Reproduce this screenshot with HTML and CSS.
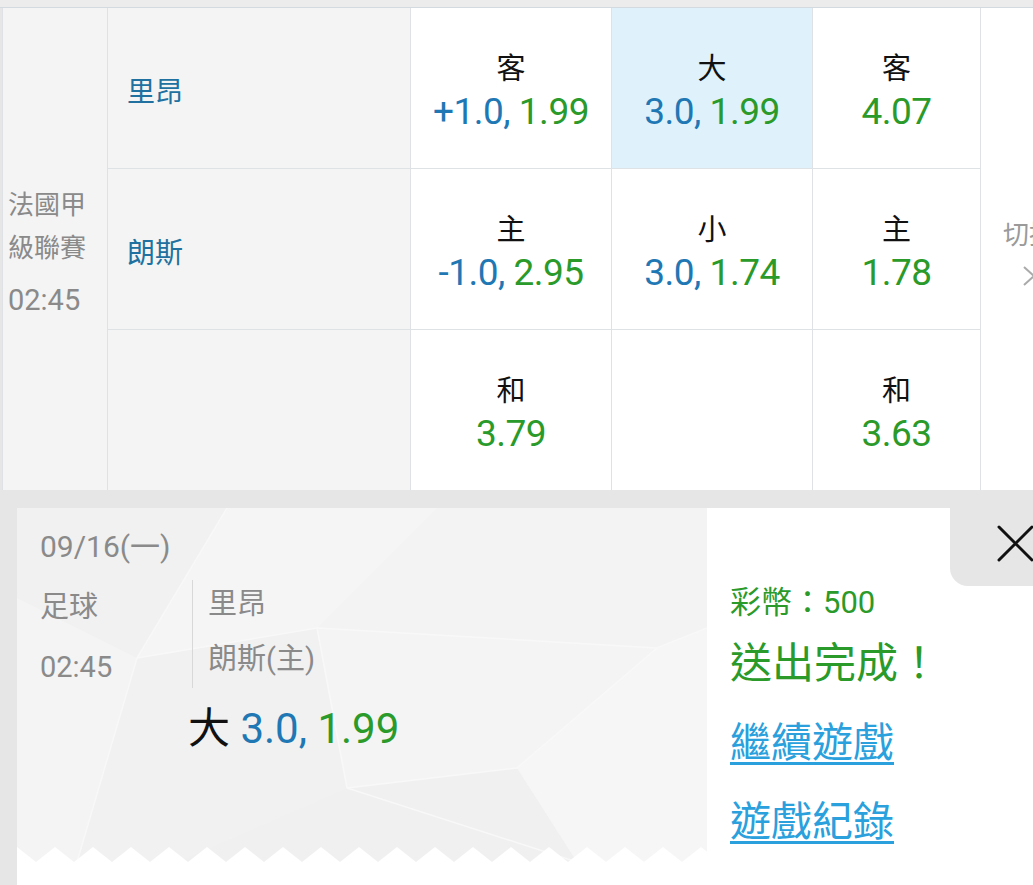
FILE: index.html
```html
<!DOCTYPE html>
<html lang="zh-Hant">
<head>
    <meta charset="UTF-8">
    <meta name="viewport" content="width=device-width, initial-scale=1.0">
    <title>投注完成</title>
    <link rel="stylesheet" href="styles.css">
</head>
<body>
    <div class="topbar"></div>
    <div class="odds">
        <div class="league">
            <div class="league-name">法國甲級聯賽</div>
            <div class="league-time">02:45</div>
        </div>

        <div class="team">里昂</div>
        <div class="cell"><div class="label">客</div><div class="num"><span class="line">+1.0,</span> <span class="rate">1.99</span></div></div>
        <div class="cell picked"><div class="label">大</div><div class="num"><span class="line">3.0,</span> <span class="rate">1.99</span></div></div>
        <div class="cell"><div class="label">客</div><div class="num"><span class="rate">4.07</span></div></div>

        <div class="switch">
            <div>切換</div>
            <svg class="chev" width="14" height="22" viewBox="0 0 14 22">
                <path d="M2 2 L12 11 L2 20" stroke="#aaa" stroke-width="2" fill="none"/>
            </svg>
        </div>

        <div class="team">朗斯</div>
        <div class="cell"><div class="label">主</div><div class="num"><span class="line">-1.0,</span> <span class="rate">2.95</span></div></div>
        <div class="cell"><div class="label">小</div><div class="num"><span class="line">3.0,</span> <span class="rate">1.74</span></div></div>
        <div class="cell"><div class="label">主</div><div class="num"><span class="rate">1.78</span></div></div>

        <div class="team"></div>
        <div class="cell"><div class="label">和</div><div class="num"><span class="rate">3.79</span></div></div>
        <div class="cell"></div>
        <div class="cell"><div class="label">和</div><div class="num"><span class="rate">3.63</span></div></div>
    </div>

    <div class="sheet">
        <div class="ticket">
            <svg class="poly" width="690" height="354" viewBox="0 0 690 354">
                <defs>
                    <pattern id="teeth" x="19" y="339" width="38" height="15" patternUnits="userSpaceOnUse">
                        <polygon points="0,15 19,0 38,15" fill="#fff"/>
                    </pattern>
                </defs>
                <polygon points="0,0 210,0 120,150 0,90" fill="#f1f1f1"/>
                <polygon points="210,0 420,0 300,120 120,150" fill="#f5f5f5"/>
                <polygon points="420,0 690,0 640,140 300,120" fill="#f3f3f3"/>
                <polygon points="0,90 120,150 60,354 0,354" fill="#f4f4f4"/>
                <polygon points="120,150 300,120 330,280 160,354 60,354" fill="#f1f1f1"/>
                <polygon points="300,120 640,140 500,260 330,280" fill="#f4f4f4"/>
                <polygon points="330,280 500,260 560,354 160,354" fill="#f0f0f0"/>
                <polygon points="640,140 690,120 690,354 560,354 500,260" fill="#f6f6f6"/>
                <g stroke="#f8f8f8" stroke-width="1.5" fill="none">
                    <polyline points="210,0 120,150 60,354"/>
                    <polyline points="120,150 300,120 640,140 690,120"/>
                    <polyline points="300,120 330,280 560,354"/>
                    <polyline points="330,280 500,260 640,140"/>
                </g>
                <rect x="0" y="339" width="690" height="15" fill="url(#teeth)"/>
            </svg>
            <div class="ticket-body">
                <div class="date">09/16(一)</div>
                <div class="match">
                    <div class="sport">
                        <div>足球</div>
                        <div>02:45</div>
                    </div>
                    <div class="teams">
                        <div>里昂</div>
                        <div>朗斯(主)</div>
                    </div>
                </div>
                <div class="bet">大 <span class="line">3.0,</span> <span class="rate">1.99</span></div>
            </div>
        </div>

        <div class="done">
            <div class="close">
                <svg width="37" height="37" viewBox="0 0 37 37">
                    <path d="M2 2 L35 35 M35 2 L2 35" stroke="#111" stroke-width="3" stroke-linecap="round"/>
                </svg>
            </div>
            <div class="coins">彩幣：500</div>
            <div class="sent">送出完成！</div>
            <a class="link" href="#">繼續遊戲</a>
            <a class="link" href="#">遊戲紀錄</a>
        </div>
    </div>
</body>
</html>
```

FILE: styles.css
```css
body {
    margin: 0;
    background-color: #e6e6e6;
    font-family: Roboto, "Noto Sans CJK TC", sans-serif;
    color: #111;
    overflow: hidden;
    height: 885px;
}
.topbar {
    height: 7px;
    background-color: #ececec;
    border-bottom: 1px solid #d3dbe0;
}
.odds {
    display: grid;
    grid-template-columns: 104px 302px 200px 200px 167px 96px;
    grid-template-rows: repeat(3, 160px);
    gap: 1px;
    width: max-content;
    margin-left: 2px;
    padding-left: 1px;
    background-color: #dfe2e4;
}
.league {
    grid-row: 1 / span 3;
    background-color: #f4f4f4;
    color: #8a8a8a;
    display: flex;
    flex-direction: column;
    justify-content: center;
    padding: 6px 0 0 5px;
}
.league-name {
    font-size: 26px;
    line-height: 43px;
    width: 82px;
}
.league-time {
    font-size: 29px;
    line-height: 40px;
    margin-top: 10px;
}
.team {
    background-color: #f4f4f4;
    color: #20719f;
    font-size: 28px;
    display: flex;
    align-items: center;
    padding: 4px 0 0 19px;
}
.cell {
    background-color: #fff;
    display: flex;
    flex-direction: column;
    justify-content: center;
    align-items: center;
    padding-top: 6px;
}
.cell.picked {
    background-color: #dff2fb;
}
.label {
    font-size: 29px;
    line-height: 42px;
}
.num {
    font-size: 37px;
    line-height: 44px;
    letter-spacing: -0.5px;
}
.line {
    color: #1f78b4;
}
.rate {
    color: #2a9a2a;
}
.switch {
    grid-column: 6;
    grid-row: 1 / span 3;
    background-color: #fff;
    color: #9a9a9a;
    font-size: 26px;
    line-height: 40px;
    display: flex;
    flex-direction: column;
    justify-content: center;
    align-items: center;
    padding-top: 4px;
}
.chev {
    margin-top: 10px;
}

.sheet {
    display: flex;
    margin: 18px 0 0 17px;
    background-color: #fff;
    height: 400px;
}
.ticket {
    position: relative;
    width: 690px;
    height: 354px;
    background-color: #f3f3f3;
}
.poly {
    position: absolute;
    left: 0;
    top: 0;
}
.ticket-body {
    position: relative;
    padding: 19px 0 0 23px;
    color: #8a8a8a;
}
.date {
    font-size: 30px;
    line-height: 40px;
}
.match {
    display: flex;
    margin-top: 10px;
    font-size: 29px;
}
.sport {
    width: 153px;
    line-height: 60px;
    position: relative;
}
.sport::after {
    content: "";
    position: absolute;
    right: 0;
    top: 3px;
    bottom: 9px;
    width: 1px;
    background-color: #d8d8d8;
}
.teams {
    padding-left: 15px;
    line-height: 55px;
}
.bet {
    margin: 7px 0 0 148px;
    font-size: 42px;
    line-height: 50px;
    color: #111;
}

.done {
    position: relative;
    flex: 1;
    padding: 73px 0 0 23px;
    display: flex;
    flex-direction: column;
    align-items: flex-start;
}
.close {
    position: absolute;
    top: 0;
    right: 0;
    width: 83px;
    height: 78px;
    background-color: #e6e6e6;
    border-bottom-left-radius: 18px;
}
.close svg {
    position: absolute;
    left: 47px;
    top: 17px;
}
.coins {
    color: #2a9a2a;
    font-size: 31px;
    line-height: 44px;
}
.sent {
    color: #2a9a2a;
    font-size: 42px;
    line-height: 56px;
    margin-top: 11px;
}
.link {
    color: #2aa0dc;
    font-size: 41px;
    line-height: 56px;
    margin-top: 23px;
    text-decoration: underline;
    text-decoration-thickness: 3px;
    text-underline-offset: 5px;
}
```
